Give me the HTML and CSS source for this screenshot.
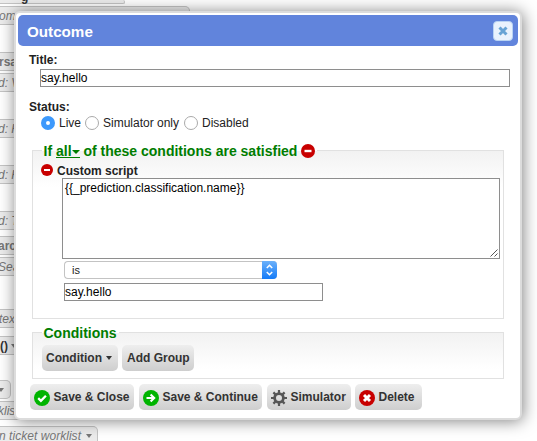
FILE: index.html
```html
<!DOCTYPE html>
<html lang="en">
<head>
<meta charset="utf-8">
<title>Outcome</title>
<link rel="stylesheet" href="styles.css">
</head>
<body>
<main class="page">
  <div class="row first"><b>g</b></div>
  <div class="row wide gap2"><i>om</i></div>
  <div class="row gap27"><b class="dim">rsa</b></div>
  <div class="row gap2"><i class="start">d: V</i></div>
  <div class="row gap27"><i class="start">d: H</i></div>
  <div class="row gap27"><i class="start">d: H</i></div>
  <div class="row gap27"><i class="start">d: T</i></div>
  <div class="row gap6"><b class="dim arc">arc</b></div>
  <div class="row gap2"><i class="sea">Sea</i></div>
  <div class="row gap33"><i>tex</i></div>
  <div class="row gap8"><b>()</b><span class="caret"></span></div>
  <div class="row short gap25"><span class="caret"></span></div>
  <div class="row gap2"><i class="start">klist</i></div>
  <div class="row last gap6"><i>n ticket worklist</i><span class="caret"></span></div>
</main>

<section class="dialog" role="dialog">
  <header class="titlebar">
    <h1>Outcome</h1>
    <button class="close"><svg width="10" height="10" viewBox="0 0 10 10"><path d="M1.5 1.5l7 7M8.5 1.5l-7 7"/></svg></button>
  </header>
  <div class="content">
    <div class="label">Title:</div>
    <input class="field title-field" value="say.hello">
    <div class="label status-label">Status:</div>
    <div class="radios">
      <span class="radio on"></span><span class="t-live">Live</span>
      <span class="radio"></span><span class="t-sim">Simulator only</span>
      <span class="radio"></span><span class="t-dis">Disabled</span>
    </div>

    <div class="group rules">
      <div class="legend"><span>If <span class="all">all<span class="caret"></span></span> of these conditions are satisfied</span>
        <svg class="minus" width="14" height="14" viewBox="0 0 14 14"><circle cx="7" cy="7" r="7" fill="#c80000"/><path d="M3.5 7h7" stroke="#fff" stroke-width="2.4"/></svg>
      </div>
      <div class="script-label">
        <svg width="12" height="12" viewBox="0 0 14 14"><circle cx="7" cy="7" r="7" fill="#c80000"/><path d="M3.5 7h7" stroke="#fff" stroke-width="2.4"/></svg>
        <span>Custom script</span>
      </div>
      <div class="area"><span>{{_prediction.classification.name}}</span>
        <svg class="grip" width="8" height="8" viewBox="0 0 8 8"><path d="M.5 7.5l7-7M4.5 7.5l3-3"/></svg>
      </div>
      <div class="select"><span>is</span>
        <span class="stepper"><svg width="15" height="18" viewBox="0 0 15 18"><path d="M4.8 7l2.7-2.7L10.2 7M4.8 11l2.7 2.7L10.2 11"/></svg></span>
      </div>
      <input class="field value-field" value="say.hello">
    </div>

    <div class="group conditions">
      <div class="legend"><span>Conditions</span></div>
      <div class="buttons">
        <button class="btn w-cond"><span>Condition</span><span class="caret"></span></button>
        <button class="btn w-add"><span>Add Group</span></button>
      </div>
    </div>

    <footer class="actions">
      <button class="btn w-close"><svg width="16" height="16" viewBox="0 0 16 16"><circle cx="8" cy="8" r="8" fill="#00b400"/><path d="M4.2 8.2l2.7 2.6 5-5" fill="none" stroke="#fff" stroke-width="2.3"/></svg><span>Save &amp; Close</span></button>
      <button class="btn w-cont"><svg width="16" height="16" viewBox="0 0 16 16"><circle cx="8" cy="8" r="8" fill="#00b400"/><path d="M3.5 8h7M7.6 4.4L11.2 8l-3.6 3.6" fill="none" stroke="#fff" stroke-width="2.1"/></svg><span>Save &amp; Continue</span></button>
      <button class="btn w-simu"><svg width="16" height="16" viewBox="0 0 16 16"><g fill="none" stroke="#555"><circle cx="8" cy="8" r="4.4" stroke-width="2.8"/><path d="M8 0v3M8 13v3M0 8h3M13 8h3M2.4 2.4l2 2M11.6 11.6l2 2M13.6 2.4l-2 2M4.4 11.6l-2 2" stroke-width="2.2"/></g></svg><span>Simulator</span></button>
      <button class="btn w-del"><svg width="16" height="16" viewBox="0 0 16 16"><circle cx="8" cy="8" r="8" fill="#c80000"/><path d="M5 5l6 6M11 5l-6 6" stroke="#fff" stroke-width="3"/></svg><span>Delete</span></button>
    </footer>
  </div>
</section>
</body>
</html>
```
FILE: styles.css
```css
* { box-sizing: border-box; }
body {
  margin: 0;
  height: 441px;
  overflow: hidden;
  background: #fff;
  color: #222;
  font: 12px/14px "Liberation Sans", Arial, sans-serif;
}
button, input { font: inherit; color: inherit; padding: 0; margin: 0; }

.caret {
  display: inline-block;
  border: 3.5px solid transparent;
  border-top: 4px solid currentColor;
  border-bottom: 0;
}

/* Rule list behind the dialog */
.page { display: flex; flex-direction: column; height: 441px; overflow: hidden; }
.row {
  flex: none;
  display: flex;
  align-items: center;
  width: 125px;
  height: 19px;
  border: 1px solid #c4c4c4;
  border-left: 0;
  border-radius: 0 5px 5px 0;
  background: #ececec;
  color: #777;
  white-space: nowrap;
}
.row b { color: #333; }
.row .dim { color: #777; margin-left: -1px; }
.row .arc { margin-left: -2px; }
.row .start { margin-left: -2px; }
.row .sea { margin-left: -2px; }
.row i { margin-left: -1px; }
.first { height: 4px; align-items: flex-end; border-top: 0; }
.first b { margin-left: 21px; line-height: 12px; height: 12px; }
.wide { width: 190px; }
.short { width: 11px; }
.short .caret { margin-left: -2px; }
.row b + .caret { margin-left: 3px; }
.last { width: 98px; }
.last i { width: 82px; letter-spacing: .04px; }
.last .caret { margin-left: 5px; }
.gap2 { margin-top: 2px; }
.gap6 { margin-top: 6px; }
.gap8 { margin-top: 8px; }
.gap25 { margin-top: 25px; }
.gap27 { margin-top: 27px; }
.gap33 { margin-top: 33px; }

.dialog {
  position: absolute;
  left: 14px;
  top: 11px;
  width: 508px;
  height: 409px;
  padding: 2px;
  border: 2px solid #dcdcdc;
  border-radius: 6px;
  background: #fff;
  box-shadow: 1px 1px 16px rgba(0, 0, 0, .5);
}
.titlebar {
  display: flex;
  align-items: center;
  justify-content: space-between;
  height: 31px;
  padding: 0 5px 0 9px;
  border-radius: 5px;
  background: #6184dc;
}
h1 { margin: 3px 0 0; color: #fff; font-size: 15.2px; line-height: 18px; }
.close {
  display: grid;
  place-items: center;
  width: 20px;
  height: 20px;
  border: 1px solid #b9d3f3;
  border-radius: 4px;
  background: #e9f2fd;
}
.close path { stroke: #67a3d5; stroke-width: 3; }

.content { padding: 7px 12px 0 11px; }
.label { height: 14px; font-weight: bold; }
.field {
  display: block;
  height: 18px;
  border: 1px solid #8e8e8e;
  padding: 0;
  background: #fff;
  color: #000;
}
.title-field { width: 470px; margin: 2px 0 0 11px; }
.status-label { margin-top: 13px; }
.radios { display: flex; align-items: center; height: 18px; margin-left: 12px; }
.radios > span:not(.radio) { margin-left: 4px; white-space: nowrap; }
.radio { width: 14px; height: 14px; border: 1px solid #aaa; border-radius: 50%; background: #fff; }
.radio.on { border: 5px solid #3d99fc; }
.t-live { width: 26px; }
.t-sim { width: 81px; }

.group {
  width: 472px;
  margin-left: 3px;
  border: 1px solid #e1e1e1;
  background: linear-gradient(#f2f2f2, #fff 36px);
}
.legend {
  display: flex;
  align-items: center;
  width: max-content;
  height: 16px;
  margin: -8px 0 0 9px;
  padding: 0 2px 0 1.5px;
  background: linear-gradient(#fff 8px, transparent 8px);
  color: #007d00;
  font-weight: bold;
  font-size: 14px;
  line-height: 16px;
  white-space: nowrap;
}
.all {
  display: inline-block;
  height: 15px;
  border-bottom: 1px solid #007d00;
  vertical-align: top;
}
.all .caret { vertical-align: 2px; border-width: 4.5px 4.25px 0; }
.minus { margin: -1px 0 0 4px; }
.rules { height: 169px; margin-top: 18px; }
.script-label {
  display: flex;
  align-items: center;
  height: 14px;
  margin: 4px 0 0 8px;
  font-weight: bold;
}
.script-label span { margin: 1px 0 0 4px; }
.area {
  display: flex;
  justify-content: space-between;
  width: 438px;
  height: 81px;
  margin: 1px 0 0 29px;
  padding: 2px 1px 1px 2px;
  border: 1px solid #8e8e8e;
  background: #fff;
  color: #000;
}
.grip { align-self: flex-end; fill: none; stroke: #555; }
.select {
  display: flex;
  justify-content: space-between;
  width: 213px;
  height: 18px;
  margin: 2px 0 0 31px;
  border: 1px solid #c3c3c3;
  border-right: 0;
  border-radius: 4px;
  background: #fff;
  font-size: 11px;
  line-height: 17px;
}
.select > span:first-child { margin-left: 7px; }
.stepper {
  width: 15px;
  height: 18px;
  margin-top: -1px;
  border-radius: 0 4px 4px 0;
  background: linear-gradient(#6cb1fa, #147bf8);
}
.stepper svg { display: block; fill: none; stroke: #fff; stroke-width: 1.6; }
.value-field { width: 259px; margin: 4px 0 0 31px; }
.conditions { height: 47px; margin-top: 13px; }

.btn {
  display: flex;
  align-items: center;
  height: 26px;
  padding: 0 0 0 4px;
  border: 0;
  border-radius: 5px;
  background: linear-gradient(#eee, #cecece);
  color: #333;
  font-weight: bold;
  white-space: nowrap;
}
.btn svg { flex: none; margin: 2px 3.5px 0 0; }
.buttons { display: flex; gap: 4px; margin: 4px 0 0 9px; }
.buttons .btn { padding-left: 4px; }
.w-cond { width: 76px; }
.w-cond .caret { margin-left: 4px; }
.buttons .w-add { width: 72px; padding-left: 5px; }
.actions { display: flex; margin: 5px 0 0 1px; }
.w-close { width: 104px; margin-right: 5px; }
.w-cont { width: 123px; margin-right: 5px; }
.w-simu { width: 84px; margin-right: 4px; }
.w-del { width: 67px; }
```
